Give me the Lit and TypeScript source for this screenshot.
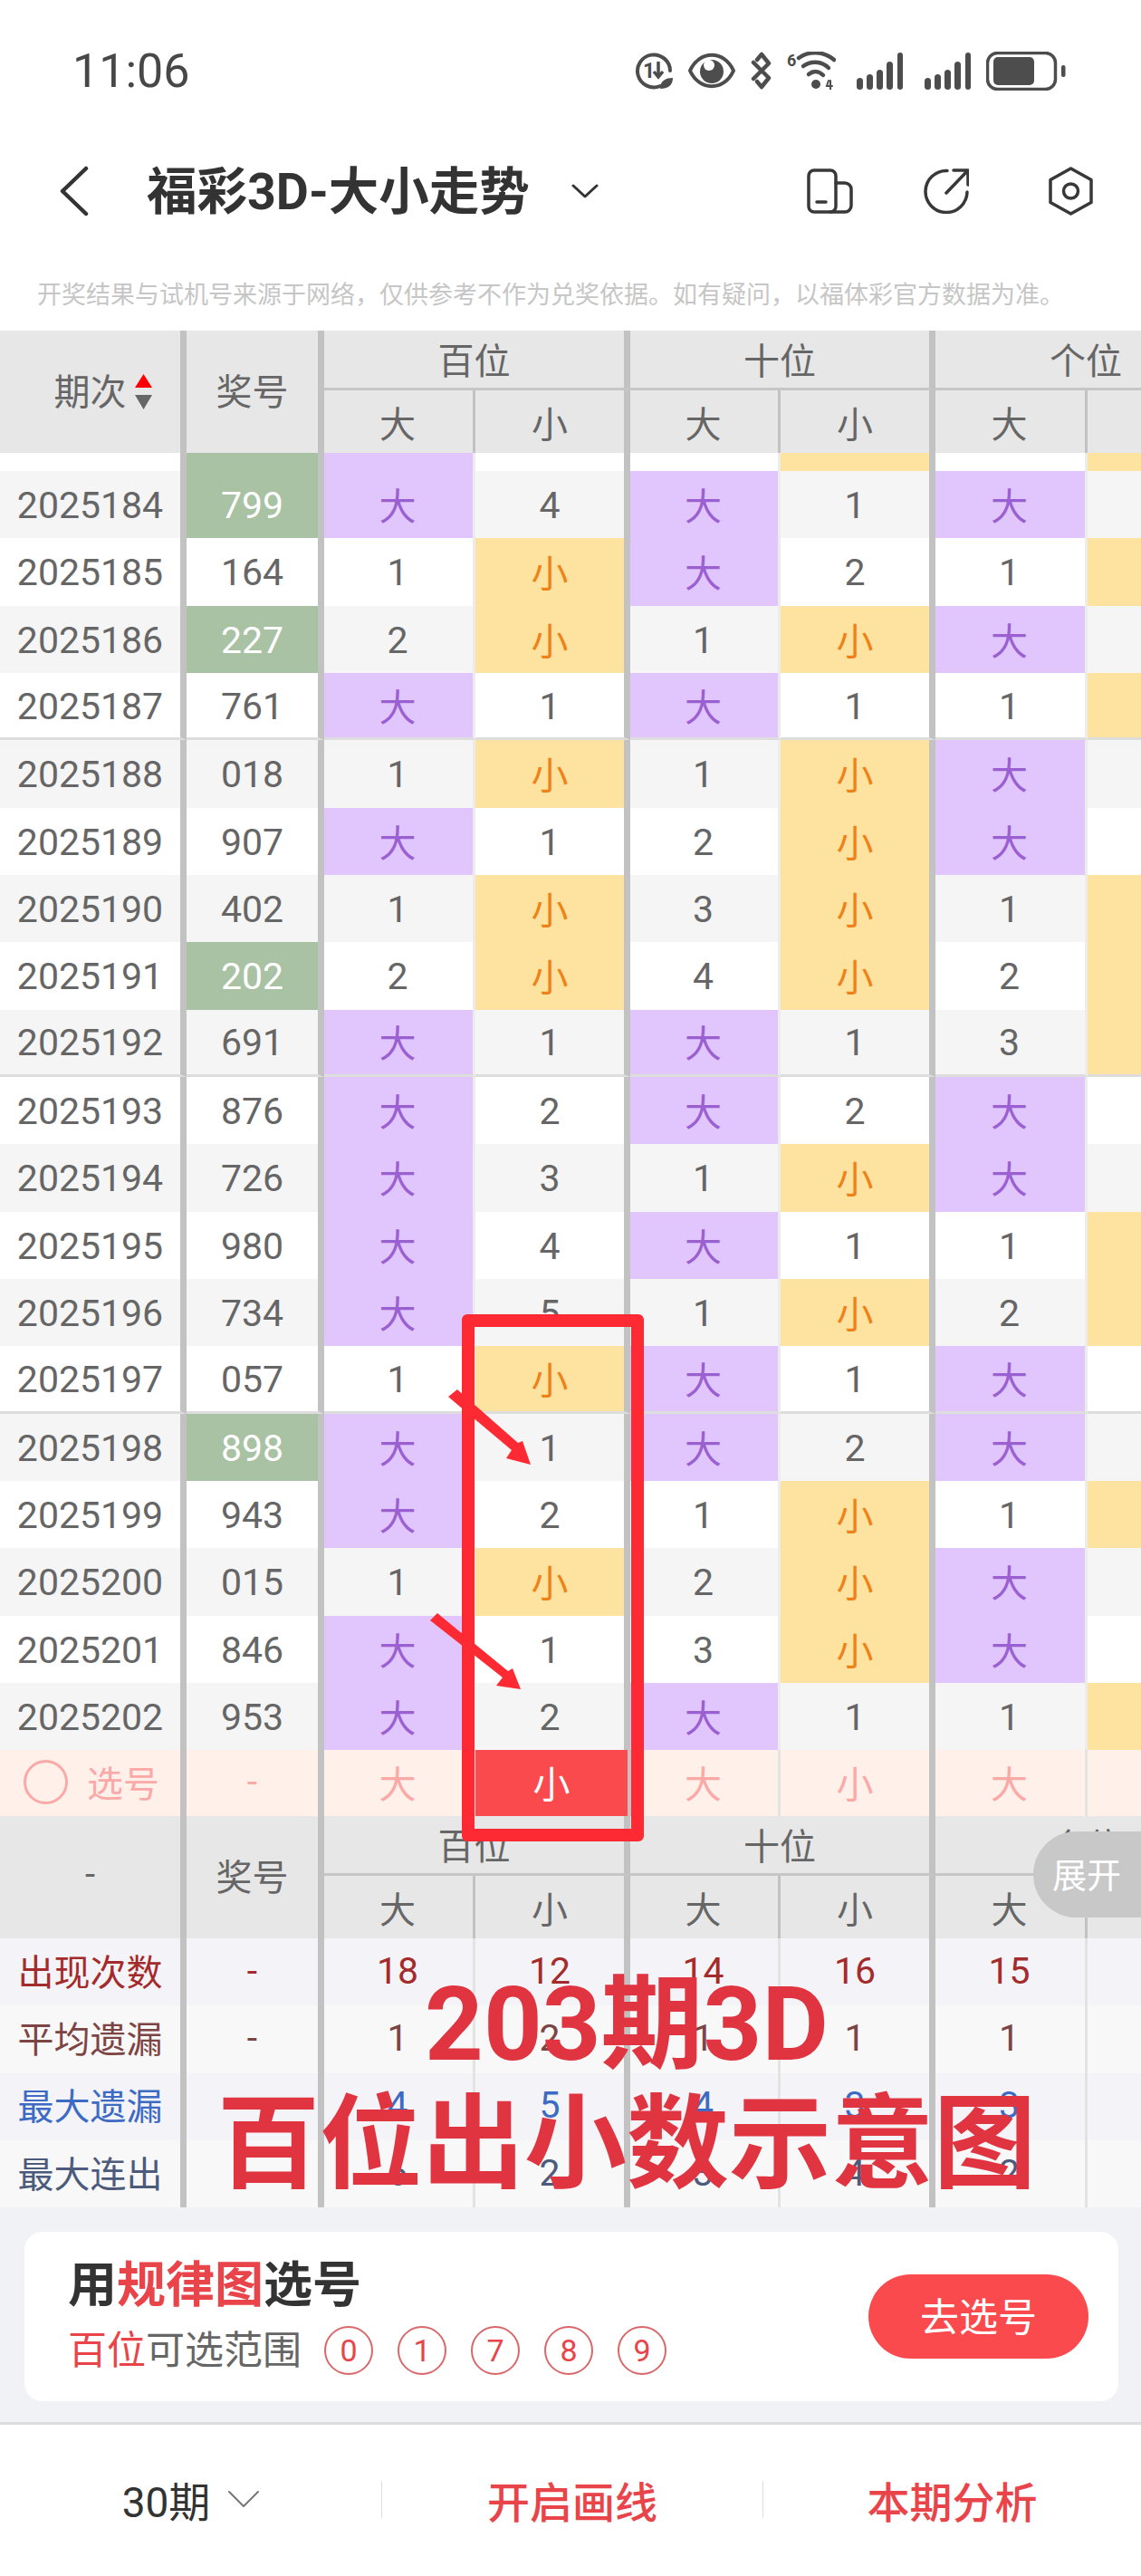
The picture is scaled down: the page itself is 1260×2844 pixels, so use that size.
import { LitElement, html, css, svg } from "lit";
import { customElement } from "lit/decorators.js";
import { classMap } from "lit/directives/class-map.js";

// period, number, pair?, then the cells of 百位 大/小, 十位 大/小, 个位 大
const ROWS: [string, string, boolean, string[]][] = [
  ["2025184", "799", true, ["大", "4", "大", "1", "大"]],
  ["2025185", "164", false, ["1", "小", "大", "2", "1"]],
  ["2025186", "227", true, ["2", "小", "1", "小", "大"]],
  ["2025187", "761", false, ["大", "1", "大", "1", "1"]],
  ["2025188", "018", false, ["1", "小", "1", "小", "大"]],
  ["2025189", "907", false, ["大", "1", "2", "小", "大"]],
  ["2025190", "402", false, ["1", "小", "3", "小", "1"]],
  ["2025191", "202", true, ["2", "小", "4", "小", "2"]],
  ["2025192", "691", false, ["大", "1", "大", "1", "3"]],
  ["2025193", "876", false, ["大", "2", "大", "2", "大"]],
  ["2025194", "726", false, ["大", "3", "1", "小", "大"]],
  ["2025195", "980", false, ["大", "4", "大", "1", "1"]],
  ["2025196", "734", false, ["大", "5", "1", "小", "2"]],
  ["2025197", "057", false, ["1", "小", "大", "1", "大"]],
  ["2025198", "898", true, ["大", "1", "大", "2", "大"]],
  ["2025199", "943", false, ["大", "2", "1", "小", "1"]],
  ["2025200", "015", false, ["1", "小", "2", "小", "大"]],
  ["2025201", "846", false, ["大", "1", "3", "小", "大"]],
  ["2025202", "953", false, ["大", "2", "大", "1", "1"]],
];

const STATS: [string, string, string[]][] = [
  ["出现次数", "s-red", ["18", "12", "14", "16", "15"]],
  ["平均遗漏", "s-brown", ["1", "2", "1", "1", "1"]],
  ["最大遗漏", "s-blue", ["4", "5", "4", "3", "3"]],
  ["最大连出", "s-slate", ["6", "2", "3", "4", "2"]],
];

const signal = svg`<svg class="bars" width="52" height="42" viewBox="0 0 52 42" fill="#4d4d4d">
  <rect x="0" y="29" width="7" height="13" rx="3.5"/><rect x="11" y="25" width="7" height="17" rx="3.5"/>
  <rect x="22" y="20" width="7" height="22" rx="3.5"/><rect x="33" y="11" width="7" height="31" rx="3.5"/>
  <rect x="45" y="1" width="6" height="41" rx="3"/></svg>`;

@customElement("app-root")
export class AppRoot extends LitElement {
  static styles = css`
    :host {
      display: block;
      position: relative;
      width: 1260px;
      height: 2844px;
      overflow: hidden;
      background: #fff;
      font-family: Roboto, "Noto Sans CJK SC", sans-serif;
      color: #666;
    }
    .status {
      height: 156px;
      display: flex;
      align-items: center;
      padding: 0 83px 0 80px;
    }
    .time {
      font-size: 52px;
      color: #474747;
      margin-right: auto;
    }
    .ic { display: block; margin-left: 17px; }
    .ic.wide { margin-left: 23px; }
    .bars { display: block; }
    .nav {
      height: 110px;
      display: flex;
      align-items: center;
      padding: 0 53px 0 66px;
    }
    .title {
      margin: 0 0 8px 64px;
      font-size: 55.5px;
      font-weight: 700;
      color: #333;
      white-space: nowrap;
    }
    .caret { margin-left: 46px; }
    .tools { margin-left: auto; display: flex; align-items: center; }
    .notice {
      padding: 40px 0 19px 41px;
      font-size: 27px;
      line-height: 40px;
      color: #c6c6c6;
      white-space: nowrap;
    }

    .table { width: 1260px; overflow: hidden; }
    .row, .head {
      display: grid;
      grid-template-columns: 206px 152px 167px 171px 166px 171px 168px 171px;
      width: 1372px;
    }
    .row { height: 74.33px; }
    .row.stub { height: 20px; background: #fff; }
    .row.grey { background: #f5f5f5; }
    .row.line .cell { border-bottom: 3px solid #ddd; }
    .cell {
      box-sizing: border-box;
      display: flex;
      align-items: center;
      justify-content: center;
      font-size: 41px;
      border-right: 3px solid #ececec;
      min-width: 0;
    }
    .row .cell { padding-top: 2px; }
    .cell.thick { border-right: 7px solid #c2c2c2; }
    .row .cell.big { background: #e1c6fd; color: #9a5fd0; padding: 0 0 2px; }
    .row .cell.small { background: #fee29f; color: #ee8219; padding: 0 0 2px; }
    .cell.pair { background: #a8c2a3; color: #fff; }

    .head { background: #e7e7e7; grid-template-rows: 66px 69px; font-size: 40px; }
    .head .cell { font-size: 40px; border-right-color: #c2c2c2; padding-bottom: 2px; }
    .head .cell.tall { grid-row: span 2; padding-bottom: 6px; }
    .head .group {
      grid-column: span 2;
      border-bottom: 3px solid #c6c6c6;
    }
    .head .sub { padding-top: 3px; }
    .head .cell.sortable { padding-left: 28px; gap: 9px; }
    .sortable svg { margin-top: 6px; }

    .pick { height: 73px; background: #fff0ea; color: #fba9a7; }
    .row.pick .cell { border-right-color: #e3e3e3; padding: 0 0 3px; }
    .row.pick .cell.thick { border-right-color: #c2c2c2; }
    .row.pick .cell.on { background: #fb4a4d; color: #fff; border-right: 4px solid #c2c2c2; margin-right: -1px; }
    .pick .ring {
      width: 49px;
      height: 49px;
      box-sizing: border-box;
      border: 3px solid #fba9a7;
      border-radius: 50%;
      margin-right: 21px;
    }
    .row.pick .first { font-size: 40px; justify-content: flex-start; padding: 0 0 3px 26px; }

    .stat.odd { background: #f4f4f8; }
    .stat.even { background: #f8f8f8; }
    .row.stat { height: 74.25px; }
    .row.stat .cell { border-right-color: #e3e3e3; padding: 0 0 3px; }
    .row.stat .cell.thick { border-right-color: #c2c2c2; }
    .row.stat .first { font-size: 40px; padding-bottom: 5px; }
    .s-red { color: #a42b2b; }
    .s-brown { color: #7d4444; }
    .s-blue { color: #3d6bc4; }
    .s-slate { color: #4c5a7c; }

    /* the 大 columns sit a little left of their cell's middle */
    .table .row .cell:not(.thick),
    .table .head .cell:not(.thick) { padding-right: 2px; }

    .panel {
      height: 240px;
      box-sizing: border-box;
      background: #f1f2f5;
      border-bottom: 3px solid #ddd;
      padding: 27px 25px 0 27px;
    }
    .card {
      height: 187px;
      box-sizing: border-box;
      background: #fff;
      border-radius: 20px;
      display: flex;
      align-items: center;
      justify-content: space-between;
      padding: 0 33px 0 48px;
    }
    .card h2 {
      margin: 0 0 14px;
      font-size: 54px;
      line-height: 60px;
      font-weight: 700;
      color: #333;
    }
    .red { color: #e8444a; }
    .range {
      display: flex;
      align-items: center;
      font-size: 43px;
      line-height: 54px;
      color: #666;
    }
    .balls { display: flex; gap: 27px; margin-left: 25px; }
    .ball {
      width: 54px;
      height: 54px;
      box-sizing: border-box;
      border: 2px solid #d9686a;
      border-radius: 50%;
      display: flex;
      align-items: center;
      justify-content: center;
      font-size: 34px;
      color: #e8444a;
    }
    .go {
      width: 243px;
      height: 93px;
      box-sizing: border-box;
      padding-bottom: 5px;
      border-radius: 47px;
      background: #fb4a4d;
      color: #fff;
      font-size: 43px;
      display: flex;
      align-items: center;
      justify-content: center;
    }

    .footer {
      height: 164px;
      display: grid;
      grid-template-columns: 421px 421px 418px;
      align-items: center;
      font-size: 47px;
      font-weight: 500;
    }
    .footer > div {
      height: 41px;
      display: flex;
      align-items: center;
      justify-content: center;
    }
    .footer > div + div { border-left: 1px solid #ddd; }
    .period { color: #333; font-weight: 400; gap: 20px; font-size: 46px; }

    .expand {
      position: absolute;
      left: 1141px;
      top: 2022px;
      width: 119px;
      height: 95px;
      box-sizing: border-box;
      padding: 0 0 4px 21px;
      border-radius: 48px 0 0 48px;
      background: #c8c8c8;
      color: #fff;
      font-size: 38px;
      display: flex;
      align-items: center;
    }
    .frame {
      position: absolute;
      left: 510px;
      top: 1451px;
      width: 201px;
      height: 582px;
      box-sizing: border-box;
      border: 14px solid #fd2a33;
      border-radius: 6px;
    }
    .arrows { position: absolute; left: 0; top: 0; }
    .caption {
      position: absolute;
      left: 192px;
      top: 2170px;
      width: 1000px;
      text-align: center;
      font-size: 113px;
      line-height: 132px;
      font-weight: 700;
      color: #e03441;
    }
  `;

  private groupHead(first: unknown) {
    return html`<div class="head">
      ${first}
      ${["百位", "十位", "个位"].map((g) => html`<div class="cell thick group">${g}</div>`)}
      ${[0, 1, 2].map(
        () => html`<div class="cell sub">大</div><div class="cell thick sub">小</div>`
      )}
    </div>`;
  }

  private kind(v: string) {
    return { big: v === "大", small: v === "小" };
  }

  private renderRow(r: (typeof ROWS)[number], i: number) {
    const [period, num, pair, vals] = r;
    const sep = i === 3 || i === 8 || i === 13;
    const lastSmall = vals[4] !== "大";
    return html`<div class=${classMap({ row: true, grey: i % 2 === 0, line: sep })}>
      <div class="cell thick">${period}</div>
      <div class=${classMap({ cell: true, thick: true, pair })}>${num}</div>
      ${vals.map(
        (v, c) => html`<div class=${classMap({ cell: true, thick: c % 2 === 1, ...this.kind(v) })}>${v}</div>`
      )}
      <div class=${classMap({ cell: true, thick: true, small: lastSmall })}></div>
    </div>`;
  }

  private statusIcons() {
    return html`
      <svg class="ic" width="42" height="42" viewBox="0 0 42 42" fill="none" stroke="#4d4d4d" stroke-width="4">
        <path d="M28 38 A18 18 0 1 1 39 21" stroke-linecap="round" />
        <text x="9" y="29" font-size="23" font-weight="700" fill="#4d4d4d" stroke="none" font-family="Roboto">1</text>
        <path d="M26 11 V27 M21 22 L26 28 L31 22" stroke-width="3.5" />
        <path d="M28 41 C28 32 34 29 42 29 C42 37 37 41 28 41 Z" fill="#4d4d4d" stroke="none" />
      </svg>
      <svg class="ic" width="52" height="40" viewBox="0 0 52 40" fill="none" stroke="#4d4d4d" stroke-width="4">
        <path d="M2 20 C12 -3 40 -3 50 20 C40 43 12 43 2 20 Z" stroke-linejoin="round" />
        <circle cx="26" cy="21" r="13" fill="#4d4d4d" stroke="none" />
        <circle cx="23" cy="14" r="6" fill="#fff" stroke="none" />
      </svg>
      <svg class="ic" width="23" height="42" viewBox="0 0 23 42" fill="none" stroke="#4d4d4d" stroke-width="4.5" stroke-linecap="round" stroke-linejoin="round">
        <path d="M3 12 L20 29 L12 39 M3 30 L20 13 L12 3 L7 9 M12 39 L7 33" />
      </svg>
      <svg class="ic" width="54" height="42" viewBox="0 0 54 42" fill="none" stroke="#4d4d4d" stroke-width="4.5" stroke-linecap="round">
        <text x="0" y="16" font-size="18" font-weight="700" fill="#4d4d4d" stroke="none" font-family="Roboto">6</text>
        <path d="M13 7 C24 -1 40 -1 52 9" />
        <path d="M18 16 C26 10 38 10 46 18" />
        <path d="M24 25 C29 21 35 21 40 26" />
        <circle cx="32" cy="36" r="5" fill="#4d4d4d" stroke="none" />
        <path d="M46 32 L44 38 H50 M48 32 V42" stroke-width="2" />
      </svg>
      <span class="ic wide">${signal}</span>
      <span class="ic wide">${signal}</span>
      <svg class="ic" width="88" height="43" viewBox="0 0 88 43" fill="none" style="margin-left:16px">
        <rect x="1.5" y="1.5" width="75" height="40" rx="11" stroke="#4d4d4d" stroke-width="3.5" />
        <rect x="8" y="6" width="45" height="31" rx="5" fill="#4d4d4d" />
        <rect x="83" y="15" width="4.5" height="13" rx="2" fill="#4d4d4d" />
      </svg>
    `;
  }

  private toolIcons() {
    return html`
      <svg width="51" height="50" viewBox="0 0 51 50" fill="none" stroke="#383838" stroke-width="3.5" stroke-linecap="round">
        <rect x="2" y="2" width="30" height="46" rx="6" />
        <path d="M32 16 H42 A7 7 0 0 1 49 23 V41 A7 7 0 0 1 42 48 H26" />
        <path d="M11 37 H21" />
      </svg>
      <svg style="margin-left:78px" width="50" height="50" viewBox="0 0 50 50" fill="none" stroke="#383838" stroke-width="3.5" stroke-linecap="round" stroke-linejoin="round">
        <path d="M26 2.5 A23 23 0 1 0 48 26" />
        <path d="M33 2 H49 V18 M49 2 L25 27" />
      </svg>
      <svg style="margin-left:88px" width="49" height="54" viewBox="0 0 49 54" fill="none" stroke="#383838" stroke-width="3.5" stroke-linejoin="round">
        <path d="M24.5 2 L47 14.5 V39.5 L24.5 52 L2 39.5 V14.5 Z" />
        <circle cx="24.5" cy="27" r="8" />
      </svg>
    `;
  }

  render() {
    return html`
      <div class="status">
        <div class="time">11:06</div>
        ${this.statusIcons()}
      </div>
      <div class="nav">
        <svg width="32" height="56" viewBox="0 0 32 56" fill="none" stroke="#333" stroke-width="4.5" stroke-linecap="round" stroke-linejoin="round">
          <path d="M29 3 L3 28 L29 53" />
        </svg>
        <div class="title">福彩3D-大小走势</div>
        <svg class="caret" width="30" height="16" viewBox="0 0 30 16" fill="none" stroke="#333" stroke-width="3" stroke-linecap="round" stroke-linejoin="round">
          <path d="M2 2 L15 14 L28 2" />
        </svg>
        <div class="tools">${this.toolIcons()}</div>
      </div>
      <div class="notice">开奖结果与试机号来源于网络，仅供参考不作为兑奖依据。如有疑问，以福体彩官方数据为准。</div>

      <div class="table">
        ${this.groupHead(html`
          <div class="cell thick tall sortable">
            期次
            <svg width="19" height="39" viewBox="0 0 19 39">
              <path d="M9.5 0 L19 15 H0 Z" fill="#f00" />
              <path d="M0 23 H19 L9.5 39 Z" fill="#666" />
            </svg>
          </div>
          <div class="cell thick tall">奖号</div>
        `)}
        <div class="row stub">
          <div class="cell thick"></div>
          <div class="cell thick pair"></div>
          <div class="cell big"></div>
          <div class="cell thick"></div>
          <div class="cell"></div>
          <div class="cell thick small"></div>
          <div class="cell"></div>
          <div class="cell thick small"></div>
        </div>
        ${ROWS.map((r, i) => this.renderRow(r, i))}
        <div class="row pick">
          <div class="cell thick first"><span class="ring"></span>选号</div>
          <div class="cell thick">-</div>
          <div class="cell">大</div>
          <div class="cell thick on">小</div>
          <div class="cell">大</div>
          <div class="cell thick">小</div>
          <div class="cell">大</div>
          <div class="cell thick"></div>
        </div>
        ${this.groupHead(html`
          <div class="cell thick tall">-</div>
          <div class="cell thick tall">奖号</div>
        `)}
        ${STATS.map(
          ([label, tone, vals], i) => html`<div class="row stat ${i % 2 ? "even" : "odd"} ${tone}">
            <div class="cell thick first">${label}</div>
            <div class="cell thick">-</div>
            ${vals.map((v, c) => html`<div class=${classMap({ cell: true, thick: c % 2 === 1 })}>${v}</div>`)}
            <div class="cell thick"></div>
          </div>`
        )}
      </div>

      <div class="panel">
        <div class="card">
          <div>
            <h2>用<span class="red">规律图</span>选号</h2>
            <div class="range">
              <span class="red">百位</span>可选范围
              <div class="balls">
                ${["0", "1", "7", "8", "9"].map((n) => html`<div class="ball">${n}</div>`)}
              </div>
            </div>
          </div>
          <div class="go">去选号</div>
        </div>
      </div>

      <div class="footer">
        <div class="period">
          30期
          <svg width="34" height="18" viewBox="0 0 34 18" fill="none" stroke="#777" stroke-width="2" stroke-linecap="round" stroke-linejoin="round">
            <path d="M1 1 L17 17 L33 1" />
          </svg>
        </div>
        <div class="red">开启画线</div>
        <div class="red">本期分析</div>
      </div>

      <div class="expand">展开</div>
      <div class="frame"></div>
      <svg class="arrows" width="1260" height="2844" fill="#fd2a33" stroke="none">
        <path d="M505 1534 L572 1593 L577 1591 L586 1617 L559 1610 L565 1601 L495 1542 Z" />
        <path d="M483 1781 L561 1845 L566 1842 L575 1865 L548 1861 L555 1852 L475 1789 Z" />
      </svg>
      <div class="caption">203期3D<br />百位出小数示意图</div>
    `;
  }
}
